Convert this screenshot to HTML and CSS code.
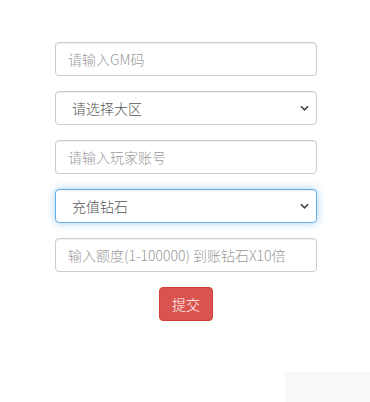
FILE: index.html
```html
<!DOCTYPE html>
<html lang="zh-CN">
<head>
    <meta charset="UTF-8">
    <meta name="viewport" content="width=device-width, initial-scale=1.0">
    <title>充值</title>
    <link rel="stylesheet" href="styles.css">
</head>
<body>
    <form class="recharge-form">
        <div class="form-group">
            <input type="text" class="form-control" placeholder="请输入GM码">
        </div>

        <div class="form-group select-wrap">
            <select class="form-control">
                <option>请选择大区</option>
            </select>
            <svg class="chevron" viewBox="0 0 10 6" width="9" height="6"><path d="M1 1 L5 5 L9 1" fill="none" stroke="#444" stroke-width="1.8"/></svg>
        </div>

        <div class="form-group">
            <input type="text" class="form-control" placeholder="请输入玩家账号">
        </div>

        <div class="form-group select-wrap">
            <select class="form-control focused">
                <option>充值钻石</option>
            </select>
            <svg class="chevron" viewBox="0 0 10 6" width="9" height="6"><path d="M1 1 L5 5 L9 1" fill="none" stroke="#444" stroke-width="1.8"/></svg>
        </div>

        <div class="form-group">
            <input type="text" class="form-control" placeholder="输入额度(1-100000) 到账钻石X10倍">
        </div>

        <div class="actions">
            <button type="button" class="btn-danger">提交</button>
        </div>
    </form>

    <div class="corner-box"></div>
</body>
</html>
```

FILE: styles.css
```css
body {
    margin: 0;
    background-color: #fff;
    font-family: "Noto Sans CJK SC", "Liberation Sans", sans-serif;
    font-size: 14px;
    font-weight: 300;
    color: #555;
}

.recharge-form {
    width: 262px;
    margin: 0 0 0 55px;
    padding-top: 42px;
}

.form-group {
    margin-bottom: 15px;
}

.form-control {
    display: block;
    box-sizing: border-box;
    width: 100%;
    height: 34px;
    padding: 6px 12px;
    font-family: inherit;
    font-size: 14px;
    font-weight: 300;
    line-height: 20px;
    color: #555;
    background-color: #fff;
    border: 1px solid #ccc;
    border-radius: 4px;
    box-shadow: inset 0 1px 1px rgba(0, 0, 0, 0.075);
    outline: none;
}

.form-control::placeholder {
    color: #999;
}

select.form-control {
    appearance: none;
    -webkit-appearance: none;
    padding-left: 16px;
}

.select-wrap {
    position: relative;
}

.chevron {
    position: absolute;
    right: 8px;
    top: 14px;
}

.focused {
    border-color: #66afe9;
    box-shadow: inset 0 1px 1px rgba(0, 0, 0, 0.075), 0 0 8px rgba(102, 175, 233, 0.6);
}

.actions {
    display: flex;
    justify-content: center;
}

.btn-danger {
    height: 34px;
    padding: 6px 12px;
    font-family: inherit;
    font-size: 14px;
    font-weight: 300;
    line-height: 20px;
    color: #fff;
    background-color: #d9534f;
    border: 1px solid #d43f3a;
    border-radius: 4px;
    cursor: pointer;
}

.corner-box {
    position: absolute;
    left: 285px;
    top: 372px;
    width: 85px;
    height: 30px;
    background-color: #f9f9f9;
}
```
